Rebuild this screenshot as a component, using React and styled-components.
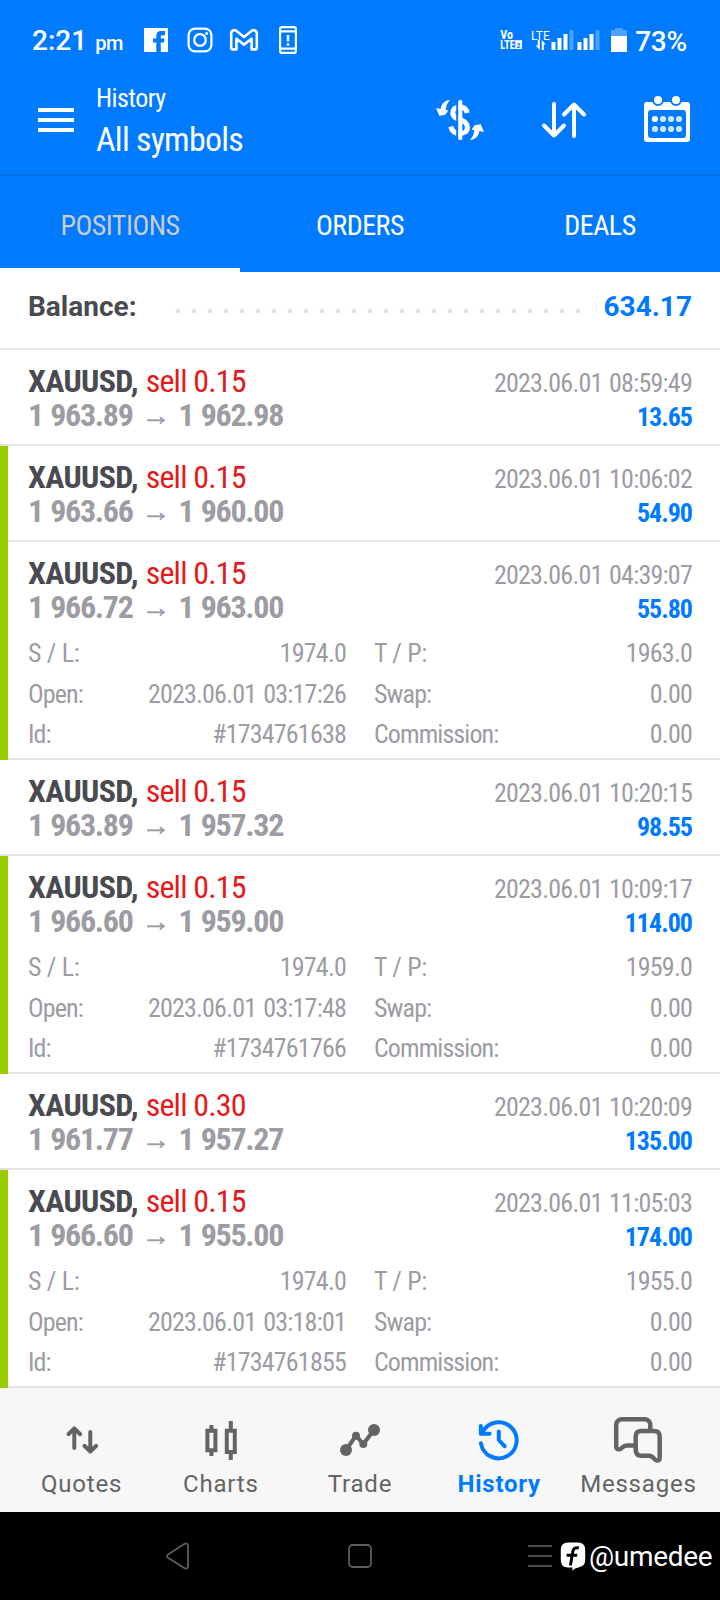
import React from "react";
import styled, { createGlobalStyle } from "styled-components";

const BLUE = "#007aff";
const CONDENSED = '"Roboto Condensed", Roboto, sans-serif';
const REGULAR = "Roboto, sans-serif";

const GlobalStyle = createGlobalStyle`
  *, *::before, *::after { box-sizing: border-box; }
  body { margin: 0; background: #fff; font-family: ${CONDENSED}; }
  svg { display: block; flex: none; overflow: visible; }
`;

const Screen = styled.div`
  width: 720px;
  height: 1600px;
  display: flex;
  flex-direction: column;
  overflow: hidden;
  background: #fff;
`;

/* status bar */
const StatusBar = styled.div`
  height: 80px;
  display: flex;
  align-items: center;
  justify-content: space-between;
  padding: 0 33px 0 32px;
  background: ${BLUE};
  color: #fff;
  font-family: ${REGULAR};
`;
const StatusIcons = styled.div`
  display: flex;
  align-items: center;
  gap: ${(p) => p.$gap}px;
`;
const Clock = styled.div`
  display: flex;
  align-items: baseline;
  gap: 8px;
  width: 112px;
  font-size: 28px;
  font-weight: 500;
  line-height: 34px;
  padding-top: 4px;
  white-space: nowrap;
`;
const Meridiem = styled.span`
  font-size: 20px;
  letter-spacing: -0.3px;
`;
const Notifications = styled.div`
  display: grid;
  grid-template-columns: 43px 43px 49px 18px;
  align-items: center;
`;
const Percent = styled.div`
  font-size: 28px;
  font-weight: 500;
  line-height: 34px;
  padding-top: 4px;
  margin-left: -2px;
  letter-spacing: -0.2px;
`;

/* app bar */
const AppBar = styled.header`
  height: 96px;
  display: flex;
  padding: 0 28px 0 38px;
  background: ${BLUE};
  border-bottom: 2px solid #006fe8;
  color: #fff;
`;
const MenuButton = styled.div`
  padding-top: 28px;
  width: 58px;
`;
const Titles = styled.div`
  flex: 1;
  padding-top: 2px;
`;
const Subtitle = styled.div`
  font-size: 26px;
  line-height: 32px;
  letter-spacing: -0.55px;
`;
const Title = styled.div`
  font-size: 34px;
  line-height: 40px;
  letter-spacing: -0.76px;
  padding-top: 5px;
`;
const Actions = styled.div`
  display: flex;
  gap: 56px;
  padding-top: 16px;
`;

/* tabs */
const Tabs = styled.nav`
  display: flex;
  height: 96px;
  background: ${BLUE};
`;
const Tab = styled.div`
  flex: 1 1 0;
  padding-top: 33px;
  text-align: center;
  font-size: 28px;
  line-height: 34px;
  letter-spacing: -0.5px;
  color: ${(p) => (p.$active ? "#cccccc" : "#fff")};
  border-bottom: 4px solid ${(p) => (p.$active ? "#fff" : "transparent")};
`;

/* balance */
const Balance = styled.div`
  display: flex;
  height: 78px;
  padding: 18px 28px 0;
  border-bottom: 2px solid #e3e3e3;
  font-family: ${REGULAR};
  font-size: 28px;
  font-weight: 700;
  line-height: 34px;
  color: #4a4a51;
`;
const BalanceLabel = styled.div`
  width: 142px;
`;
const Dots = styled.div`
  width: 416px;
  height: 16px;
  margin-top: 13px;
  background: radial-gradient(circle at 8px 8px, #e4e4e4 2.1px, transparent 2.9px) 0 0 / 16px 16px repeat-x;
`;
const BalanceValue = styled.div`
  flex: 1;
  text-align: right;
  color: ${BLUE};
`;

/* deals */
const Deal = styled.article`
  display: flex;
  height: ${(p) => (p.$open ? 218 : 96)}px;
`;
const Marker = styled.div`
  width: 8px;
  height: 100%;
  flex: none;
  background: ${(p) => (p.$on ? "#99cc00" : "linear-gradient(#e3e3e3, #e3e3e3) bottom / 100% 2px no-repeat")};
`;
const DealBody = styled.div`
  flex: 1;
  padding: 14px 28px 0 20px;
  border-bottom: 2px solid #e3e3e3;
`;
const Summary = styled.div`
  display: flex;
  justify-content: space-between;
  line-height: 34px;
  color: #9c9ca2;
`;
const SummaryRight = styled.div`
  padding-top: 2px;
  text-align: right;
`;
const Symbol = styled.div`
  font-size: 32px;
  font-weight: 700;
  letter-spacing: -0.66px;
  color: #4a4a51;
`;
const Side = styled.span`
  font-weight: 400;
  letter-spacing: -0.82px;
  margin-left: 1px;
  color: #e31b1b;
`;
const Prices = styled.div`
  display: flex;
  font-size: 32px;
  font-weight: 700;
  letter-spacing: -1.3px;
  word-spacing: 1.2px;
`;
const Arrow = styled.span`
  width: 46px;
  padding-left: 1px;
  text-align: center;
  font-family: "Liberation Sans", sans-serif;
  font-size: 29px;
  font-weight: 400;
  letter-spacing: 0;
  height: 34px;
  -webkit-text-stroke: 0.5px currentColor;
`;
const Time = styled.div`
  font-size: 26px;
  letter-spacing: -0.77px;
  word-spacing: 1.2px;
`;
const Profit = styled.div`
  font-size: 26px;
  font-weight: 700;
  letter-spacing: -1px;
  color: ${BLUE};
`;
const Details = styled.dl`
  margin: 7px 0 0;
  display: grid;
  grid-template-columns: 1fr 1fr;
  column-gap: 28px;
  font-size: 26px;
  line-height: 40.5px;
  color: #9c9ca2;
`;
const Field = styled.div`
  display: flex;
  justify-content: space-between;
`;
const FieldName = styled.dt`
  letter-spacing: ${(p) => (p.$spaced ? "-0.35px" : "-0.9px")};
`;
const FieldValue = styled.dd`
  margin: 0;
  letter-spacing: -0.8px;
  word-spacing: 1.8px;
`;

/* bottom navigation */
const BottomNav = styled.nav`
  height: 124px;
  display: flex;
  padding: 0 12px;
  background: #f7f7f7;
  font-family: ${REGULAR};
`;
const NavItem = styled.div`
  flex: 1 1 0;
  min-width: 0;
  display: flex;
  flex-direction: column;
  align-items: center;
  gap: 6px;
  padding-top: 28px;
  font-size: 24px;
  line-height: 28px;
  font-weight: ${(p) => (p.$active ? 700 : 400)};
  letter-spacing: ${(p) => (p.$active ? 0.75 : 0.8)}px;
  color: ${(p) => (p.$active ? BLUE : "#646464")};
`;

/* system navigation */
const SystemNav = styled.div`
  height: 88px;
  display: flex;
  align-items: center;
  padding-left: 165px;
  background: #000;
  color: #fff;
`;
const SystemKey = styled.div`
  margin-right: ${(p) => p.$after}px;
`;
const Handle = styled.div`
  font-family: ${REGULAR};
  font-size: 28px;
  line-height: 34px;
  letter-spacing: -0.3px;
  padding: 1px 0 0 3px;
`;

const FacebookIcon = () => (
  <svg width="24" height="24" viewBox="0 0 24 24">
    <path d="M0 0H24V24H0Z" fill="#fff" />
    <path d="M12.3 24V14.6H9V10.4H12.3V8Q12.3 3 17 3H21V7.2H18.5Q16.8 7.2 16.8 8.6V10.4H20.5L20 14.6H16.8V24Z" fill={BLUE} />
  </svg>
);
const InstagramIcon = () => (
  <svg width="26" height="26" viewBox="0 0 26 26" fill="none" stroke="#fff" strokeWidth="2.2">
    <rect x="1.6" y="1.6" width="22.8" height="22.8" rx="6.5" />
    <circle cx="13" cy="13" r="5.8" />
    <circle cx="19.6" cy="6.4" r="1.5" fill="#fff" stroke="none" />
  </svg>
);
const GmailIcon = () => (
  <svg width="28" height="22" viewBox="0 0 28 22" fill="none" stroke="#fff" strokeWidth="2.6" strokeLinejoin="round">
    <path d="M1.2 18.7V4.2A3.2 3.2 0 0 1 6.2 1.7L14 8L21.8 1.7A3.2 3.2 0 0 1 26.8 4.2V18.7Q26.8 20.4 25.1 20.4H21.6V9.8L14 15.6L6.4 9.8V20.4H2.9Q1.2 20.4 1.2 18.7Z" />
  </svg>
);
const PhoneIcon = () => (
  <svg width="18" height="28" viewBox="0 0 18 28" fill="none" stroke="#fff" strokeWidth="2.2">
    <rect x="1.1" y="1.1" width="15.8" height="25.8" rx="2" />
    <path d="M1 5.3H17M1 22.7H17" />
    <path d="M9 9V15.5M9 17.3V19.8" strokeWidth="2.6" />
  </svg>
);
const VolteIcon = () => (
  <svg width="21" height="20" viewBox="0 0 21 20" fill="#fff" fontFamily={CONDENSED} fontWeight="700">
    <text x="0.3" y="9.3" fontSize="12" textLength="12.8" lengthAdjust="spacingAndGlyphs">Vo</text>
    <text x="0.3" y="18.8" fontSize="12" textLength="14.4" lengthAdjust="spacingAndGlyphs">LTE</text>
    <rect x="15.2" y="10.2" width="6.8" height="8.8" />
    <text x="16.6" y="17.6" fontSize="8" fill={BLUE}>2</text>
  </svg>
);
const SignalIcon = () => (
  <svg width="70" height="20" viewBox="0 0 70 20" fill="#fff">
    <text x="0" y="9.8" fontSize="12.5" fontFamily={REGULAR} textLength="18.8" lengthAdjust="spacingAndGlyphs">LTE</text>
    <path d="M6.8 10H8.8V20L4.6 15.5H6.8ZM10.8 20V10L14.8 14.5H12.8V20Z" />
    <path d="M20.5 12h4v8h-4zM26.5 8h4v12h-4zM32.5 4h4v16h-4zM46.5 12h4v8h-4zM52.5 8h4v12h-4zM58.5 4h4v16h-4z" />
    <path d="M38.5 0h4v20h-4zM64.5 0h4v20h-4z" opacity=".3" />
  </svg>
);
const BatteryIcon = () => (
  <svg width="16" height="24" viewBox="0 0 16 24" fill="#fff">
    <path d="M4 0H12V2H16V8H0V2H4Z" opacity=".3" />
    <path d="M0 8H16V24H0Z" />
  </svg>
);
const MenuIcon = () => (
  <svg width="36" height="24" viewBox="0 0 36 24" fill="#fff">
    <path d="M0 0H36V4H0ZM0 10H36V14H0ZM0 20H36V24H0Z" />
  </svg>
);

const ARROW_HEAD = "M14 4C8.5 4.3 5.3 8 4.6 13L0 12L3.4 20L9.6 18.6L12.4 14.2L9.8 14C10 10 11.3 6.8 14 4Z";
const CurrencyIcon = () => (
  <svg width="48" height="48" viewBox="0 0 48 48">
    <path d="M31.2 17C30.4 12.4 27.5 11 24 11C19 11 16.8 13.6 16.8 16.8C16.8 21 20 22.3 24 23.6C29 25.2 31.4 27.3 31.4 31.4C31.4 35.8 28 37.4 24 37.4C19 37.4 15.8 35 14.8 30.6" fill="none" stroke="#fff" strokeWidth="5" />
    <path d="M20.2 4H22.3V44H20.2Z" fill={BLUE} />
    <rect x="22.3" y="4" width="4" height="40" rx="1.5" fill="#fff" />
    <path d={ARROW_HEAD} fill="#fff" />
    <path d={ARROW_HEAD} fill="#fff" transform="rotate(180 24 24)" />
  </svg>
);
const SortIcon = () => (
  <svg width="48" height="48" viewBox="0 0 48 48" fill="none" stroke="#fff" strokeWidth="4" strokeLinecap="round" strokeLinejoin="round">
    <path d="M14 8V39.5M4 29.5L14 39.5L24 29.5M34 40V8.5M24 18.5L34 8.5L44 18.5" />
  </svg>
);
const CalendarIcon = () => (
  <svg width="48" height="48" viewBox="0 0 48 48">
    <path fillRule="evenodd" fill="#fff" d="M3 6H43Q46 6 46 9V43Q46 46 43 46H3Q0 46 0 43V9Q0 6 3 6ZM7 14Q4 14 4 17V39Q4 42 7 42H39Q42 42 42 39V17Q42 14 39 14Z" />
    {[14, 32].map((x) => (
      <circle key={x} cx={x} cy="4" r="5" fill="#fff" stroke={BLUE} strokeWidth="2" />
    ))}
    {[23, 33].map((y) =>
      [11, 19, 27, 35].map((x) => (
        <circle key={`${x}-${y}`} cx={x} cy={y} r="3.1" fill="#fff" opacity={x === 11 && y === 23 ? 1 : 0.8} />
      ))
    )}
  </svg>
);

const LineIcon = styled.svg.attrs((p) => ({ width: 48, height: 48, viewBox: p.viewBox || "0 0 48 48" }))`
  fill: none;
  stroke: currentColor;
  stroke-width: 4;
`;
const QuotesIcon = () => (
  <LineIcon strokeLinecap="round" strokeLinejoin="round">
    <path d="M16.3 32V12.4M10.4 18.2L16.3 12.4L22.2 18.2M32.3 16V35.6M26.4 29.8L32.3 35.6L38.2 29.8" />
  </LineIcon>
);
const ChartsIcon = () => (
  <LineIcon>
    <path d="M10.4 14.7H18.4V34.3H10.4ZM14.4 9V13M14.4 36V40M29.8 14.7H37.8V36H29.8ZM33.8 5V13M33.8 37.5V44" />
  </LineIcon>
);
const TradeIcon = () => (
  <LineIcon>
    <path d="M10 34L20 19.7L27.3 28L38 14" />
    <g fill="currentColor" stroke="none">
      <circle cx="10" cy="34" r="6" />
      <circle cx="20" cy="19.7" r="4" />
      <circle cx="27.3" cy="28" r="4" />
      <circle cx="38" cy="14" r="6" />
    </g>
  </LineIcon>
);
const HistoryIcon = () => (
  <LineIcon strokeLinecap="round">
    <path d="M5.9 27.2A18 18 0 1 0 7.6 16.2M23.8 15.5V24L29.6 30.2" />
    <path d="M5.8 10V17.8H14.6" strokeLinejoin="round" />
    <path d="M5.8 13V17.8H11Z" fill="currentColor" stroke="none" />
  </LineIcon>
);
const MessagesIcon = () => (
  <LineIcon viewBox="4 11 48 48" strokeLinejoin="round">
    <g strokeWidth="4.5">
      <path d="M40.3 26V20A5.8 5.8 0 0 0 34.5 14.2H12A5.8 5.8 0 0 0 6.2 20V41.5Q6.2 44.8 9.6 44.3C12.4 43.8 12.3 40.6 17 40.6H24.5" />
      <path d="M31.4 26H44Q49.7 26 49.7 31.7V52.4Q49.7 55.4 47 55.4C43.4 55.4 44 50.8 39 50.8H31.4Q25.7 50.8 25.7 45.1V31.7Q25.7 26 31.4 26Z" />
    </g>
  </LineIcon>
);

const BackIcon = () => (
  <svg width="25" height="28" viewBox="0 0 25 28" fill="none" stroke="#5c5c5c" strokeWidth="1.8" strokeLinejoin="round">
    <path d="M3 12.6L18.8 2.2Q23 0 23 4V24Q23 28 18.8 25.8L3 15.8Q1 14.2 3 12.6Z" />
  </svg>
);
const HomeIcon = () => (
  <svg width="24" height="24" viewBox="0 0 24 24" fill="none" stroke="#5c5c5c" strokeWidth="1.8">
    <rect x="1" y="1" width="22" height="22" rx="3.5" />
  </svg>
);
const RecentsIcon = () => (
  <svg width="24" height="22" viewBox="0 0 24 22" fill="#4c4c4c">
    <path d="M0 0H24V2H0ZM0 10H24V12H0ZM0 20H24V22H0Z" />
  </svg>
);
const BadgeIcon = () => (
  <svg width="26" height="30" viewBox="0 0 26 30">
    <path d="M8 1.5H18Q25.2 1.5 25.2 9V19Q25.2 25 19 26.2Q14.5 26.8 12.3 29.8L12.6 26.5H8Q.8 26.5 .8 19V9Q.8 1.5 8 1.5Z" fill="#fff" />
    <path d="M18.8 7Q13.4 5.3 12.6 11.5L10.4 24.5M6.6 14.2H17.2" fill="none" stroke="#000" strokeWidth="3" />
  </svg>
);

const deals = [
  { lot: "0.15", from: "1 963.89", to: "1 962.98", time: "2023.06.01 08:59:49", profit: "13.65" },
  { lot: "0.15", from: "1 963.66", to: "1 960.00", time: "2023.06.01 10:06:02", profit: "54.90", marked: true },
  { lot: "0.15", from: "1 966.72", to: "1 963.00", time: "2023.06.01 04:39:07", profit: "55.80", marked: true,
    details: { sl: "1974.0", tp: "1963.0", open: "2023.06.01 03:17:26", id: "#1734761638" } },
  { lot: "0.15", from: "1 963.89", to: "1 957.32", time: "2023.06.01 10:20:15", profit: "98.55" },
  { lot: "0.15", from: "1 966.60", to: "1 959.00", time: "2023.06.01 10:09:17", profit: "114.00", marked: true,
    details: { sl: "1974.0", tp: "1959.0", open: "2023.06.01 03:17:48", id: "#1734761766" } },
  { lot: "0.30", from: "1 961.77", to: "1 957.27", time: "2023.06.01 10:20:09", profit: "135.00" },
  { lot: "0.15", from: "1 966.60", to: "1 955.00", time: "2023.06.01 11:05:03", profit: "174.00", marked: true,
    details: { sl: "1974.0", tp: "1955.0", open: "2023.06.01 03:18:01", id: "#1734761855" } },
];

const navItems = [
  { label: "Quotes", Icon: QuotesIcon },
  { label: "Charts", Icon: ChartsIcon },
  { label: "Trade", Icon: TradeIcon },
  { label: "History", Icon: HistoryIcon, active: true },
  { label: "Messages", Icon: MessagesIcon },
];

function DetailField({ name, value, spaced }) {
  return (
    <Field>
      <FieldName $spaced={spaced}>{name}</FieldName>
      <FieldValue>{value}</FieldValue>
    </Field>
  );
}

function DealRow({ deal }) {
  const d = deal.details;
  return (
    <Deal $open={Boolean(d)}>
      <Marker $on={deal.marked} />
      <DealBody>
        <Summary>
          <div>
            <Symbol>
              XAUUSD, <Side>sell {deal.lot}</Side>
            </Symbol>
            <Prices>
              <span>{deal.from}</span>
              <Arrow>→</Arrow>
              <span>{deal.to}</span>
            </Prices>
          </div>
          <SummaryRight>
            <Time>{deal.time}</Time>
            <Profit>{deal.profit}</Profit>
          </SummaryRight>
        </Summary>
        {d && (
          <Details>
            <DetailField name="S / L:" value={d.sl} spaced />
            <DetailField name="T / P:" value={d.tp} spaced />
            <DetailField name="Open:" value={d.open} />
            <DetailField name="Swap:" value="0.00" />
            <DetailField name="Id:" value={d.id} />
            <DetailField name="Commission:" value="0.00" />
          </Details>
        )}
      </DealBody>
    </Deal>
  );
}

export default function App() {
  return (
    <Screen>
      <GlobalStyle />
      <StatusBar>
        <StatusIcons $gap={0}>
          <Clock>
            <span>2:21</span>
            <Meridiem>pm</Meridiem>
          </Clock>
          <Notifications>
            <FacebookIcon />
            <InstagramIcon />
            <GmailIcon />
            <PhoneIcon />
          </Notifications>
        </StatusIcons>
        <StatusIcons $gap={10}>
          <VolteIcon />
          <SignalIcon />
          <BatteryIcon />
          <Percent>73%</Percent>
        </StatusIcons>
      </StatusBar>
      <AppBar>
        <MenuButton>
          <MenuIcon />
        </MenuButton>
        <Titles>
          <Subtitle>History</Subtitle>
          <Title>All symbols</Title>
        </Titles>
        <Actions>
          <CurrencyIcon />
          <SortIcon />
          <CalendarIcon />
        </Actions>
      </AppBar>
      <Tabs>
        <Tab $active>POSITIONS</Tab>
        <Tab>ORDERS</Tab>
        <Tab>DEALS</Tab>
      </Tabs>
      <Balance>
        <BalanceLabel>Balance:</BalanceLabel>
        <Dots />
        <BalanceValue>634.17</BalanceValue>
      </Balance>
      {deals.map((deal) => (
        <DealRow key={deal.time} deal={deal} />
      ))}
      <BottomNav>
        {navItems.map(({ label, Icon, active }) => (
          <NavItem key={label} $active={active}>
            <Icon />
            {label}
          </NavItem>
        ))}
      </BottomNav>
      <SystemNav>
        <SystemKey $after={158}>
          <BackIcon />
        </SystemKey>
        <SystemKey $after={156}>
          <HomeIcon />
        </SystemKey>
        <SystemKey $after={8}>
          <RecentsIcon />
        </SystemKey>
        <BadgeIcon />
        <Handle>@umedee</Handle>
      </SystemNav>
    </Screen>
  );
}
